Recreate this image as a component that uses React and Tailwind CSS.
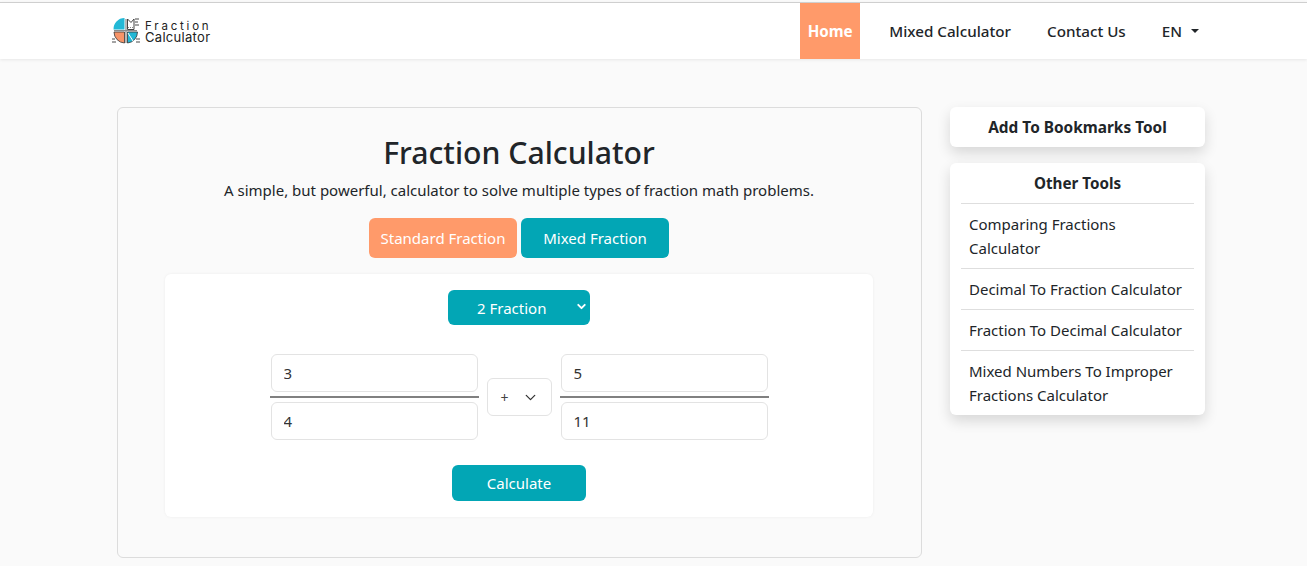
import React from 'react';
import { ChevronDown } from 'lucide-react';

const Logo = () => (
  <div className="flex items-center gap-[5px] font-['Inter',sans-serif] text-[#222]">
    <svg width="28" height="30" viewBox="0 0 28 30">
      {/* top left: blue quarter */}
      <path d="M12.500 2 A11 11 0 0 0 1.500 13.500 H12.500 Z" fill="#22b8d6" />
      {/* top right: outlined quarter with a bite */}
      <path d="M15.500 13.500 V3 L19 6.500 L22 3 V13.500 Z" fill="#fff" stroke="#444" strokeWidth="1" />
      <path d="M16 11.500h6" stroke="#888" strokeWidth="1" strokeDasharray="1 1" />
      <path d="M23 3h4M23 6h3M23 9h4" stroke="#333" strokeWidth="0.900" fill="none" />
      {/* bottom left: orange quarter */}
      <path d="M12.500 16 H2 A11 11 0 0 0 12.500 27 Z" fill="#f79468" stroke="#333" strokeWidth="0.800" />
      {/* bottom right: blue quarter */}
      <path d="M15.500 16 H25.500 A11 11 0 0 1 15.500 27 Z" fill="#22b8d6" stroke="#333" strokeWidth="0.800" />
      <path d="M16 17 L21 25" stroke="#fff" strokeWidth="1" />
      <path d="M0 23h3M0 26h4M24 23h4M24 26h4" stroke="#333" strokeWidth="0.900" fill="none" />
      {/* gray cross between the quarters */}
      <path d="M14 3v24M2 14.700h23" stroke="#8a8a8a" strokeWidth="1.200" />
    </svg>
    <div className="flex flex-col leading-[11px] mt-[1px]">
      <span className="text-[11.500px] tracking-[2.800px]">Fraction</span>
      <span className="text-[13px] tracking-[0.300px]">Calculator</span>
    </div>
  </div>
);

const Field = ({ value }) => (
  <input
    readOnly
    value={value}
    className="w-[207px] h-[38px] px-3 mx-[1px] bg-white border border-[#e3e3e3] rounded-md text-[15px] text-[#333] outline-none"
  />
);

const FractionInput = ({ top, bottom }) => (
  <div className="flex flex-col items-center">
    <Field value={top} />
    <div className="w-[209px] h-[2px] bg-[#808080] mt-[4px] mb-[4px]" />
    <Field value={bottom} />
  </div>
);

const tools = [
  'Comparing Fractions Calculator',
  'Decimal To Fraction Calculator',
  'Fraction To Decimal Calculator',
  'Mixed Numbers To Improper Fractions Calculator',
];

const App = () => {
  return (
    <div className="h-[566px] overflow-hidden bg-[#fafafa] font-['Noto_Sans',sans-serif] text-[#212529]">
      {/* Navbar */}
      <div className="mt-[2px] border-t border-[#cfcfcf] bg-white h-[57px] shadow-[0_1px_3px_rgba(0,0,0,0.08)] flex items-center pl-[112px] pr-[108px] justify-between">
        <Logo />
        <nav className="flex items-center h-full text-[15.200px] font-medium text-[#212529]">
          <a className="h-full w-[60px] bg-[#ff9a6a] text-white font-bold flex items-center justify-center">Home</a>
          <a className="ml-[29px]">Mixed Calculator</a>
          <a className="ml-[36px]">Contact Us</a>
          <a className="ml-[36px] flex items-center">
            EN
            <span className="ml-[9px] w-0 h-0 border-x-[4px] border-x-transparent border-t-[4px] border-t-[#212529]" />
          </a>
        </nav>
      </div>

      <div className="flex items-start pl-[117px] pt-[48px]">
        {/* Main card */}
        <div className="w-[805px] h-[451px] border border-[#dcdcdc] rounded-md flex flex-col items-center pt-[26px] pl-[47px] pr-[48px]">
          <h1 className="text-[30.200px] leading-[38px] font-medium">Fraction Calculator</h1>
          <p className="mt-[6px] text-[15px] leading-[24px]">A simple, but powerful, calculator to solve multiple types of fraction math problems.</p>

          <div className="flex gap-1 mt-[16px]">
            <button className="w-[148px] h-[40px] rounded-md bg-[#ff9a6a] text-white text-[15px]">Standard Fraction</button>
            <button className="w-[148px] h-[40px] rounded-md bg-[#02a6b5] text-white text-[15px]">Mixed Fraction</button>
          </div>

          <div className="mt-[16px] w-[708px] h-[243px] bg-white rounded-md shadow-[0_0_3px_rgba(0,0,0,0.06)] flex flex-col items-center pt-[16px]">
            <div className="relative w-[142px] h-[35px] rounded-md bg-[#02a6b5] text-white text-[15px] flex items-center pl-[29px] pt-[1px]">
              2 Fraction
              <ChevronDown size={13} strokeWidth={3.500} className="absolute right-[2px] top-[10px]" />
            </div>

            <div className="flex items-center mt-[29px]">
              <FractionInput top="3" bottom="4" />
              <div className="mx-[8px] w-[65px] h-[38px] bg-white border border-[#e3e3e3] rounded-md flex items-center pl-[13px] gap-[13px] text-[14px] text-[#444]">
                +
                <ChevronDown size={17} strokeWidth={1.800} className="text-[#333]" />
              </div>
              <FractionInput top="5" bottom="11" />
            </div>

            <button className="mt-[25px] w-[134px] h-[36px] rounded-md bg-[#02a6b5] text-white text-[15px]">Calculate</button>
          </div>
        </div>

        {/* Sidebar */}
        <div className="ml-[28px] w-[255px] flex flex-col gap-4">
          <div className="h-[40px] pt-[1px] bg-white rounded-md shadow-[0_6px_14px_rgba(0,0,0,0.14)] flex items-center justify-center text-[15.400px] font-bold">
            Add To Bookmarks Tool
          </div>
          <div className="bg-white rounded-md shadow-[0_6px_14px_rgba(0,0,0,0.14)] px-[11px] h-[252px]">
            <div className="h-[41px] flex items-center justify-center text-[15.200px] font-bold border-b border-[#dedede]">Other Tools</div>
            {tools.map((tool, i) => (
              <div
                key={tool}
                className={`px-[8px] py-[8px] text-[15px] leading-[24px] ${i < tools.length - 1 ? 'border-b border-[#dedede]' : ''}`}
              >
                {tool}
              </div>
            ))}
          </div>
        </div>
      </div>
    </div>
  );
};

export default App;
